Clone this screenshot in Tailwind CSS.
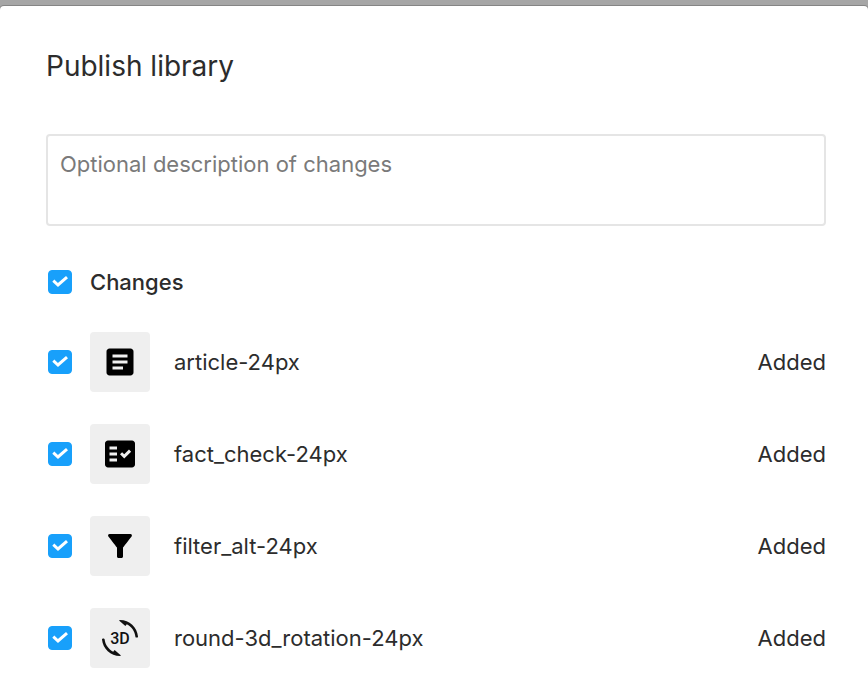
<!DOCTYPE html>
<html lang="en">

<head>
    <meta charset="UTF-8">
    <meta name="viewport" content="width=device-width, initial-scale=1.0">
    <title>Publish library</title>
    <script src="https://cdn.jsdelivr.net/npm/@tailwindcss/browser@4"></script>
</head>

<body class="bg-[#a6a6a6] pt-1.5 font-['Inter',sans-serif] text-[22px] leading-8 text-[#2c2c2c]">
    <svg class="hidden">
        <symbol id="tick" viewBox="0 0 24 24">
            <path d="M5.300 10.700l4.700 4.300 9-7.800" fill="none" stroke="#fff" stroke-width="3" />
        </symbol>
    </svg>
    <main class="min-h-[calc(100vh-6px)] rounded-t-sm bg-white pt-10 pr-[42px] pb-4 pl-[46px] shadow-[0_0_0_1px_#858585]">
        <h1 class="text-[28px] leading-10">Publish library</h1>
        <textarea aria-label="Description" placeholder="Optional description of changes"
            class="mt-12 block h-[92px] w-full resize-none rounded-sm border-2 border-[#e5e5e5] px-3 py-3 outline-none placeholder:text-[#7a7a7a]"></textarea>

        <div class="mt-10 ml-0.5 flex items-center gap-[18px]">
            <span class="grid size-6 shrink-0">
                <input type="checkbox" id="all" checked class="peer col-start-1 row-start-1 size-6 appearance-none rounded-sm border border-[#18a0fb] checked:bg-[#18a0fb]">
                <svg class="pointer-events-none invisible col-start-1 row-start-1 size-6 peer-checked:visible"><use href="#tick" /></svg>
            </span>
            <label for="all" class="font-medium">Changes</label>
        </div>

        <ul class="mt-[34px] ml-0.5 flex flex-col gap-8">
            <li class="flex items-center">
                <span class="grid size-6 shrink-0">
                    <input type="checkbox" id="article" checked class="peer col-start-1 row-start-1 size-6 appearance-none rounded-sm border border-[#18a0fb] checked:bg-[#18a0fb]">
                    <svg class="pointer-events-none invisible col-start-1 row-start-1 size-6 peer-checked:visible"><use href="#tick" /></svg>
                </span>
                <span class="ml-[18px] grid size-[60px] shrink-0 place-items-center rounded-sm bg-[#efefef]">
                    <svg class="size-9" viewBox="0 0 24 24">
                        <path d="M19 3H5c-1.1 0-2 .9-2 2v14c0 1.1.9 2 2 2h14c1.1 0 2-.9 2-2V5c0-1.1-.9-2-2-2zm-5 14H7v-2h7v2zm3-4H7v-2h10v2zm0-4H7V7h10v2z" />
                    </svg>
                </span>
                <label for="article" class="ml-6 flex-1">article-24px</label>
                <span>Added</span>
            </li>
            <li class="flex items-center">
                <span class="grid size-6 shrink-0">
                    <input type="checkbox" id="fact-check" checked class="peer col-start-1 row-start-1 size-6 appearance-none rounded-sm border border-[#18a0fb] checked:bg-[#18a0fb]">
                    <svg class="pointer-events-none invisible col-start-1 row-start-1 size-6 peer-checked:visible"><use href="#tick" /></svg>
                </span>
                <span class="ml-[18px] grid size-[60px] shrink-0 place-items-center rounded-sm bg-[#efefef]">
                    <svg class="size-9" viewBox="0 0 24 24">
                        <path d="M20 3H4c-1.1 0-2 .9-2 2v14c0 1.1.9 2 2 2h16c1.1 0 2-.9 2-2V5c0-1.1-.9-2-2-2zM10 17H5v-2h5v2zm0-4H5v-2h5v2zm0-4H5V7h5v2zm4.82 6L12 12.16l1.41-1.41 1.41 1.42L17.99 9l1.42 1.42L14.82 15z" />
                    </svg>
                </span>
                <label for="fact-check" class="ml-6 flex-1">fact_check-24px</label>
                <span>Added</span>
            </li>
            <li class="flex items-center">
                <span class="grid size-6 shrink-0">
                    <input type="checkbox" id="filter" checked class="peer col-start-1 row-start-1 size-6 appearance-none rounded-sm border border-[#18a0fb] checked:bg-[#18a0fb]">
                    <svg class="pointer-events-none invisible col-start-1 row-start-1 size-6 peer-checked:visible"><use href="#tick" /></svg>
                </span>
                <span class="ml-[18px] grid size-[60px] shrink-0 place-items-center rounded-sm bg-[#efefef]">
                    <svg class="size-9" viewBox="0 0 24 24">
                        <path d="M4.25 5.61C6.27 8.2 10 13 10 13v6c0 .55.45 1 1 1h2c.55 0 1-.45 1-1v-6s3.72-4.8 5.74-7.39c.51-.66.04-1.61-.79-1.61H5.04c-.83 0-1.3.95-.79 1.61z" />
                    </svg>
                </span>
                <label for="filter" class="ml-6 flex-1">filter_alt-24px</label>
                <span>Added</span>
            </li>
            <li class="flex items-center">
                <span class="grid size-6 shrink-0">
                    <input type="checkbox" id="rotation" checked class="peer col-start-1 row-start-1 size-6 appearance-none rounded-sm border border-[#18a0fb] checked:bg-[#18a0fb]">
                    <svg class="pointer-events-none invisible col-start-1 row-start-1 size-6 peer-checked:visible"><use href="#tick" /></svg>
                </span>
                <span class="ml-[18px] grid size-[60px] shrink-0 place-items-center rounded-sm bg-[#efefef]">
                    <svg class="size-9" viewBox="0 0 36 36" fill="#111">
                        <path d="M18 0C27.400 0 35.200 7.300 36 16.500c.1 1.300-2.400 1.500-2.600.2C32.800 11.200 29.500 6.700 24.800 4.300L23.400 5.900 17 .4z" />
                        <path d="M18 36C8.600 36 .8 28.700 0 19.500c-.1-1.300 2.400-1.500 2.600-.2C3.200 24.800 6.500 29.300 11.200 31.700L12.600 30.100 19 35.600z" />
                        <text x="18" y="24" text-anchor="middle" class="font-['Roboto',sans-serif] text-[16px] font-medium">3D</text>
                    </svg>
                </span>
                <label for="rotation" class="ml-6 flex-1">round-3d_rotation-24px</label>
                <span>Added</span>
            </li>
        </ul>
    </main>
</body>

</html>
